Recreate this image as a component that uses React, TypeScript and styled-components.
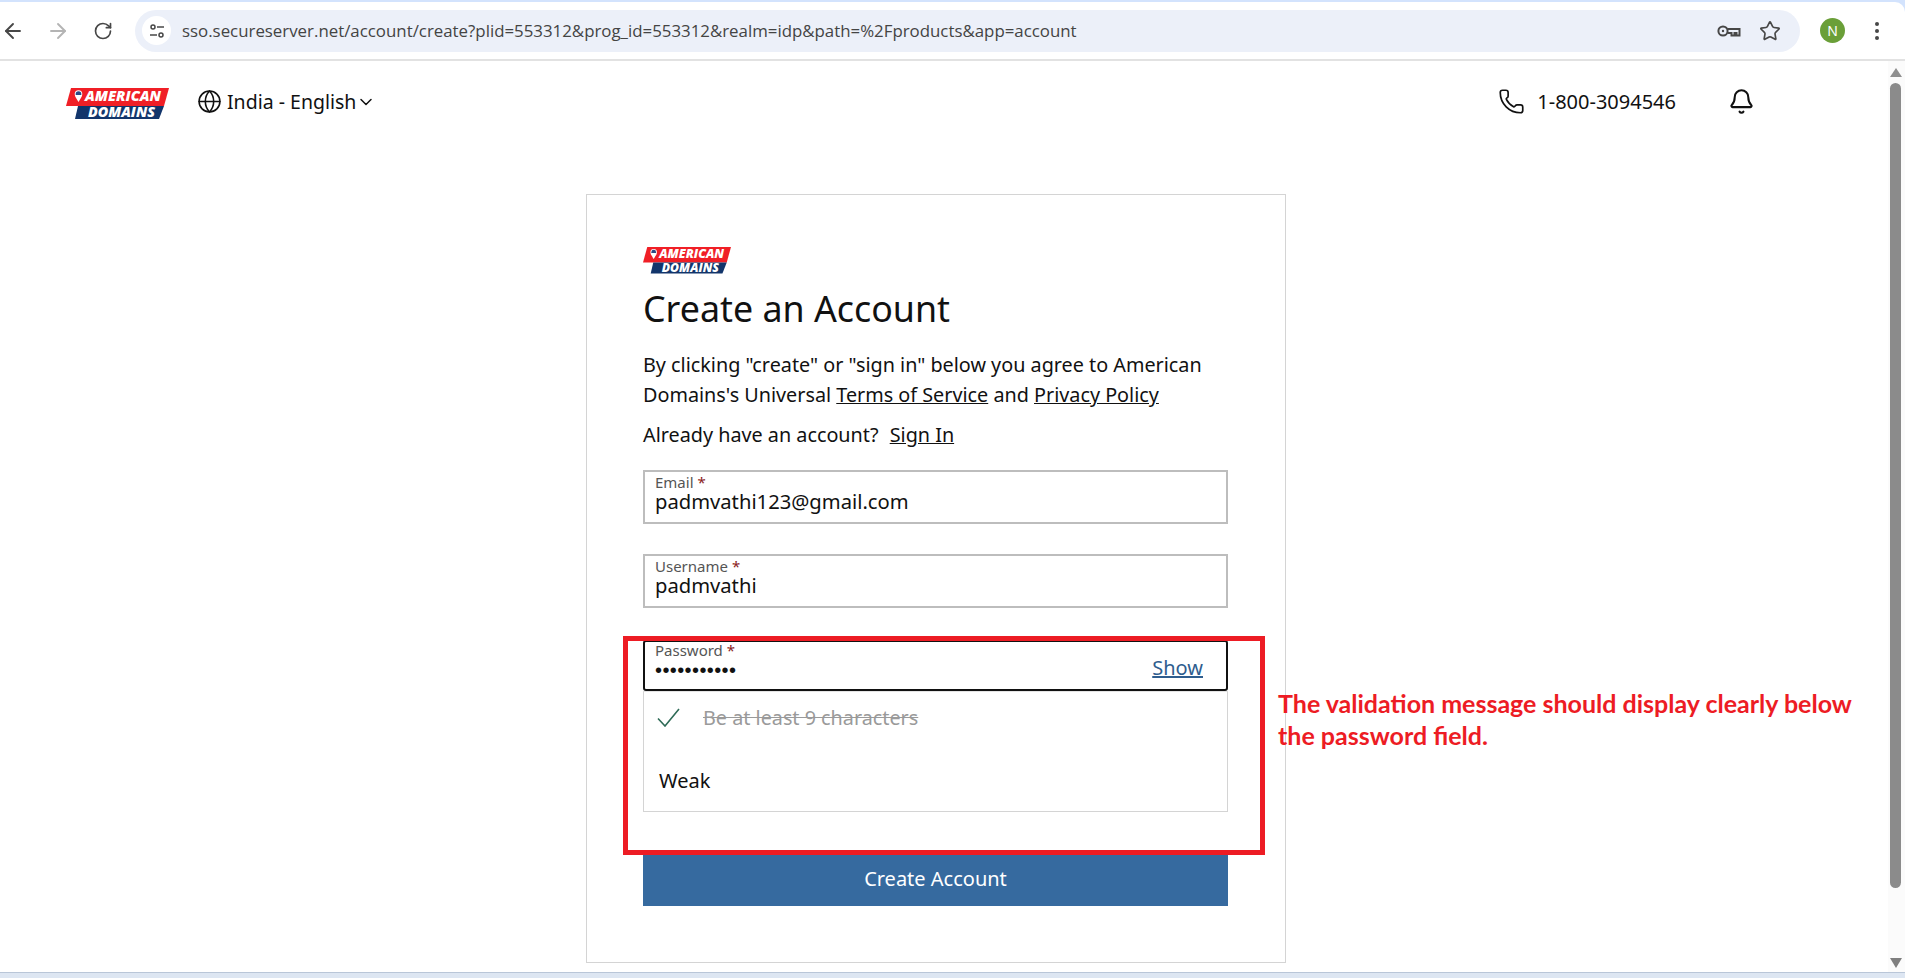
import { createGlobalStyle } from 'styled-components';
import styled from 'styled-components';
import { ArrowLeft, ArrowRight, RotateCw, Star, Globe, ChevronDown, Phone, Bell } from 'lucide-react';

const GlobalStyle = createGlobalStyle`
    html, body {
        margin: 0;
        padding: 0;
        height: 978px;
        overflow: hidden;
        background: #fff;
        font-family: "Noto Sans", "Open Sans", sans-serif;
    }
    * { box-sizing: border-box; }
`;

const Window = styled.div`
    position: relative;
    width: 1905px;
    height: 978px;
    display: flex;
    flex-direction: column;
    background: #d3e3fd;
`;

const TabEdge = styled.div`
    height: 2px;
    flex: none;
`;

const Toolbar = styled.div`
    height: 59px;
    flex: none;
    display: flex;
    align-items: center;
    background: #fff;
    border-bottom: 2px solid #e2e2e2;
    border-top-right-radius: 10px;
`;

const NavButton = styled.span<{ $faded?: boolean; $inset?: number }>`
    width: 45px;
    padding-left: ${p => p.$inset ?? 0}px;
    display: flex;
    color: ${p => (p.$faded ? '#b4b4b4' : '#474747')};
`;

const AddressBar = styled.div`
    width: 1665px;
    height: 42px;
    display: flex;
    align-items: center;
    padding: 0 19px 0 7px;
    border-radius: 21px;
    background: #ecf0f9;
`;

const SiteInfo = styled.span`
    width: 29px;
    height: 29px;
    flex: none;
    display: flex;
    align-items: center;
    justify-content: center;
    border-radius: 50%;
    background: #fff;
    color: #474747;
`;

const Url = styled.span`
    flex: 1;
    margin-left: 11px;
    font-family: "Open Sans", sans-serif;
    font-size: 16.85px;
    color: #444;
    white-space: nowrap;
`;

const BarIcons = styled.span`
    display: flex;
    align-items: center;
    gap: 18px;
    color: #474747;
`;

const Avatar = styled.span`
    width: 25px;
    height: 25px;
    margin-left: 20px;
    flex: none;
    display: flex;
    align-items: center;
    justify-content: center;
    border-radius: 50%;
    background: #6a9f38;
    color: #fff;
    font-size: 14px;
`;

const MenuDots = styled.span`
    margin-left: 30px;
    display: flex;
    flex-direction: column;
    gap: 3px;

    i {
        width: 4px;
        height: 4px;
        border-radius: 50%;
        background: #474747;
    }
`;

const Viewport = styled.div`
    height: 911px;
    flex: none;
    display: flex;
    background: #fff;
`;

const Page = styled.div`
    flex: 1;
    min-width: 0;
`;

const Header = styled.header`
    height: 81px;
    display: flex;
    align-items: center;
    padding: 0 0 0 66px;
`;

const HeaderLogo = styled.span`
    margin-top: 4px;
    display: flex;
`;

const LogoMark = styled.svg`
    flex: none;
    display: block;
    overflow: visible;
`;

const LogoWord = styled.text`
    font-family: "Open Sans", sans-serif;
    font-style: italic;
    font-weight: 800;
    font-size: 14px;
    fill: #fff;
`;

const LocaleIcon = styled.span`
    margin-left: 28px;
    display: flex;
`;

const Locale = styled.span`
    margin-left: 5px;
    font-size: 19.5px;
    color: #111;
`;

const PhoneWrap = styled.span`
    margin-left: auto;
    display: flex;
`;

const PhoneNumber = styled.span`
    margin-left: 12px;
    font-size: 20px;
    color: #111;
`;

const BellWrap = styled.span`
    margin: 0 133px 0 52px;
    display: flex;
`;

const Card = styled.main`
    width: 700px;
    height: 769px;
    margin: 52px 0 0 586px;
    padding: 52px 57px 0 56px;
    border: 1px solid #d4d4d4;
`;

const Title = styled.h1`
    margin: 11px 0 0;
    font-size: 35.8px;
    line-height: 49px;
    font-weight: 400;
    color: #111;
`;

const Intro = styled.p`
    margin: 17px 0 0;
    font-size: 19.8px;
    line-height: 30px;
    color: #111;
`;

const SignInRow = styled.p`
    margin: 10px 0 0;
    font-size: 19.8px;
    line-height: 30px;
    color: #111;
`;

const TextLink = styled.a`
    color: #111;
    text-decoration: underline;
`;

const SignInLink = styled(TextLink)`
    margin-left: 6px;
`;

const Field = styled.div<{ $focused?: boolean; $gap: number }>`
    position: relative;
    height: ${p => (p.$focused ? 51 : 54)}px;
    margin-top: ${p => p.$gap}px;
    padding: ${p => (p.$focused ? 1 : 3)}px 10px 0;
    border: 2px solid ${p => (p.$focused ? '#111' : '#bdbdbd')};
    border-radius: ${p => (p.$focused ? 3 : 0)}px;
    display: flex;
    flex-direction: column;
`;

const Label = styled.label`
    font-size: 15px;
    line-height: 15px;
    color: #555;

    b {
        font-weight: 400;
        color: #8a1c1c;
    }
`;

const Value = styled.span`
    margin-top: -2px;
    font-size: 20.2px;
    line-height: 27px;
    color: #111;
`;

const Dots = styled.span`
    font-size: 20px;
    line-height: 24px;
    letter-spacing: 0.4px;
    font-family: "Liberation Sans", sans-serif;
    color: #111;
`;

const ShowLink = styled.a`
    position: absolute;
    top: 12px;
    right: 23px;
    font-size: 20px;
    line-height: 27px;
    color: #2f5d8e;
    text-decoration: underline;
`;

const Rules = styled.div`
    height: 121px;
    padding: 6px 13px 0;
    border: 1px solid #d4d4d4;
    border-top-color: #e4e4e4;
`;

const RuleRow = styled.div`
    display: flex;
    align-items: center;
    height: 36px;
    padding-top: 2px;
    color: #2f6b57;
`;

const RuleText = styled.span`
    margin-left: 23px;
    font-size: 19.8px;
    color: #9a9a9a;
    text-decoration: line-through;
`;

const Strength = styled.div`
    margin-top: 33px;
    margin-left: 2px;
    font-size: 20px;
    line-height: 27px;
    color: #111;
`;

const CreateButton = styled.button`
    display: block;
    width: 100%;
    height: 51px;
    margin-top: 43px;
    padding: 0 0 4px;
    border: 0;
    background: #366a9f;
    color: #fff;
    font-family: inherit;
    font-size: 20px;
`;

const Scrollbar = styled.div`
    width: 17px;
    flex: none;
    padding-right: 2px;
    background: #fbfbfb;
    display: flex;
    flex-direction: column;
    align-items: center;
`;

const ScrollArrow = styled.span<{ $down?: boolean }>`
    width: 0;
    height: 0;
    flex: none;
    margin: ${p => (p.$down ? '0 0 4px' : '7px 0 0')};
    border-left: 6px solid transparent;
    border-right: 6px solid transparent;
    ${p => (p.$down ? 'border-top: 10px solid #7f7f7f;' : 'border-bottom: 9px solid #8f8f8f;')}
`;

const ScrollThumb = styled.span`
    width: 11px;
    height: 805px;
    margin-top: 6px;
    border-radius: 6px;
    background: #8b8b8b;
`;

const ScrollSpacer = styled.span`
    flex: 1;
`;

const BottomEdge = styled.div`
    flex: 1;
    border-top: 1px solid #b9c6d8;
    background: #dde6f2;
`;

const Callout = styled.div`
    position: absolute;
    left: 623px;
    top: 636px;
    width: 642px;
    height: 219px;
    border: 5px solid #ed1c24;
    pointer-events: none;
`;

const CalloutNote = styled.div`
    position: absolute;
    left: 1278px;
    top: 687px;
    width: 600px;
    font-family: Lato, "Noto Sans", sans-serif;
    font-size: 25px;
    font-weight: 700;
    line-height: 32px;
    color: #ed1c24;
`;

function Logo({ width }: { width: number }) {
    return (
        <LogoMark width={width} viewBox="0 0 103 31">
            <polygon points="5,0 103,0 98,18 0,18" fill="#f01f26" />
            <polygon points="12,18 98,18 93,31 9,31" fill="#12356b" />
            <path d="M8.7 6a3.8 3.8 0 0 1 7.6 0c0 2.5-2 5-3.8 8-1.8-3-3.8-5.5-3.8-8z" fill="#fff" />
            <path d="M9.7 6a2.8 2.8 0 0 1 5.6 0v1h-5.6z" fill="#2b4a86" />
            <LogoWord x="19" y="13" textLength="76" lengthAdjust="spacingAndGlyphs">AMERICAN</LogoWord>
            <LogoWord x="22" y="29" textLength="67" lengthAdjust="spacingAndGlyphs">DOMAINS</LogoWord>
        </LogoMark>
    );
}

function TuneIcon() {
    return (
        <svg width="16" height="16" viewBox="0 0 16 16" fill="none" stroke="currentColor" strokeWidth="1.5">
            <circle cx="4" cy="4" r="2" />
            <path d="M8 4h7" />
            <circle cx="12" cy="12" r="2" />
            <path d="M1 12h7" />
        </svg>
    );
}

function KeyIcon() {
    return (
        <svg width="24" height="14" viewBox="0 0 24 14" fill="none" stroke="currentColor" strokeWidth="2">
            <circle cx="6" cy="7" r="4.6" />
            <circle cx="6" cy="7" r="1.2" fill="currentColor" stroke="none" />
            <path d="M10.5 5h12v6.5h-3V9h-2v2.5h-3V9h-4" />
        </svg>
    );
}

function CheckMark() {
    return (
        <svg width="23" height="19" viewBox="0 0 23 19" fill="none" stroke="currentColor" strokeWidth="1.6">
            <path d="M1 10.5 8 18 22 1" />
        </svg>
    );
}

export default function App() {
    return (
        <Window>
            <GlobalStyle />
            <TabEdge />
            <Toolbar>
                <NavButton $inset={1}><ArrowLeft size={24} strokeWidth={1.9} /></NavButton>
                <NavButton $faded $inset={1}><ArrowRight size={24} strokeWidth={1.9} /></NavButton>
                <NavButton $inset={3}><RotateCw size={20} strokeWidth={2} /></NavButton>
                <AddressBar>
                    <SiteInfo><TuneIcon /></SiteInfo>
                    <Url>sso.secureserver.net/account/create?plid=553312&prog_id=553312&realm=idp&path=%2Fproducts&app=account</Url>
                    <BarIcons>
                        <KeyIcon />
                        <Star size={22} strokeWidth={1.8} />
                    </BarIcons>
                </AddressBar>
                <Avatar>N</Avatar>
                <MenuDots><i /><i /><i /></MenuDots>
            </Toolbar>
            <Viewport>
                <Page>
                    <Header>
                        <HeaderLogo><Logo width={103} /></HeaderLogo>
                        <LocaleIcon><Globe size={25} strokeWidth={1.5} color="#111" /></LocaleIcon>
                        <Locale>India - English</Locale>
                        <ChevronDown size={20} strokeWidth={1.8} color="#111" />
                        <PhoneWrap><Phone size={27} strokeWidth={1.5} color="#111" /></PhoneWrap>
                        <PhoneNumber>1-800-3094546</PhoneNumber>
                        <BellWrap><Bell size={27} strokeWidth={1.8} color="#111" /></BellWrap>
                    </Header>
                    <Card>
                        <Logo width={88} />
                        <Title>Create an Account</Title>
                        <Intro>
                            By clicking "create" or "sign in" below you agree to American Domains's Universal <TextLink>Terms of Service</TextLink> and <TextLink>Privacy Policy</TextLink>
                        </Intro>
                        <SignInRow>Already have an account? <SignInLink>Sign In</SignInLink></SignInRow>
                        <Field $gap={20}>
                            <Label>Email <b>*</b></Label>
                            <Value>padmvathi123@gmail.com</Value>
                        </Field>
                        <Field $gap={30}>
                            <Label>Username <b>*</b></Label>
                            <Value>padmvathi</Value>
                        </Field>
                        <Field $gap={32} $focused>
                            <Label>Password <b>*</b></Label>
                            <Dots>•••••••••••</Dots>
                            <ShowLink>Show</ShowLink>
                        </Field>
                        <Rules>
                            <RuleRow>
                                <CheckMark />
                                <RuleText>Be at least 9 characters</RuleText>
                            </RuleRow>
                            <Strength>Weak</Strength>
                        </Rules>
                        <CreateButton>Create Account</CreateButton>
                    </Card>
                </Page>
                <Scrollbar>
                    <ScrollArrow />
                    <ScrollThumb />
                    <ScrollSpacer />
                    <ScrollArrow $down />
                </Scrollbar>
            </Viewport>
            <BottomEdge />
            <Callout />
            <CalloutNote>The validation message should display clearly below<br />the password field.</CalloutNote>
        </Window>
    );
}
